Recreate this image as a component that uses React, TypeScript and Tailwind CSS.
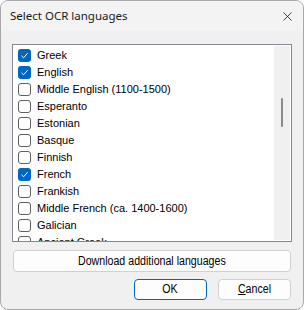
import { X } from "lucide-react"

const languages = [
  { name: "Greek", checked: true },
  { name: "English", checked: true },
  { name: "Middle English (1100-1500)", checked: false },
  { name: "Esperanto", checked: false },
  { name: "Estonian", checked: false },
  { name: "Basque", checked: false },
  { name: "Finnish", checked: false },
  { name: "French", checked: true },
  { name: "Frankish", checked: false },
  { name: "Middle French (ca. 1400-1600)", checked: false },
  { name: "Galician", checked: false },
  { name: "Ancient Greek", checked: false },
]

function Checkbox({ checked }: { checked: boolean }) {
  if (checked) {
    return (
      <span className="flex h-[13px] w-[13px] shrink-0 items-center justify-center rounded-[3px] bg-[#0067c0]">
        <svg width="9" height="9" viewBox="0 0 9 9" fill="none">
          <path d="M1.5 4.8 L3.6 6.8 L7.6 2.2" stroke="white" strokeWidth="1" />
        </svg>
      </span>
    )
  }
  return <span className="h-[13px] w-[13px] shrink-0 rounded-[3px] border border-[#5f5f5f] bg-white" />
}

export default function App() {
  return (
    <div className="h-[310px] w-[304px] bg-white">
      <div className="flex h-full w-full flex-col overflow-hidden rounded-lg border border-[#a8a8a8] bg-[#f0f0f0] font-['Liberation_Sans',sans-serif] text-[11px] text-black">
        {/* Title bar */}
        <div className="flex h-[30px] shrink-0 items-center justify-between bg-[#f3f3f3] pl-[9px] pr-[8px]">
          <span className="font-['Noto_Sans',sans-serif] text-[11.5px] text-[#1a1a1a]">Select OCR languages</span>
          <X className="size-[15px] text-[#1a1a1a]" strokeWidth={1.3} />
        </div>

        {/* Language list */}
        <div className="mx-[11px] mt-[13px] flex h-[198px] shrink-0 overflow-hidden border border-[#838790] bg-white">
          <div className="flex-1 overflow-hidden pt-[2px]">
            {languages.map((lang) => (
              <div key={lang.name} className="flex h-[17px] items-center gap-[6px] pl-[5px] whitespace-nowrap">
                <Checkbox checked={lang.checked} />
                <span className="text-[11px]">{lang.name}</span>
              </div>
            ))}
          </div>
          <div className="relative my-[1px] mr-[1px] w-[16px] shrink-0 bg-[#f0f0f0]">
            <div className="absolute left-[7px] top-[52px] h-[29px] w-[2px] rounded-full bg-[#8a8a8a]" />
          </div>
        </div>

        {/* Buttons */}
        <div className="mx-[12px] mt-[8px]">
          <button className="h-[22px] w-full rounded-[4px] border border-[#d0d0d0] bg-[#fdfdfd] text-[12.5px]">
            <span className="inline-block scale-x-[0.85]">Download additional languages</span>
          </button>
        </div>
        <div className="mx-[12px] mt-[7px] flex justify-end gap-[11px]">
          <button className="h-[21px] w-[73px] rounded-[4px] border border-[#0067c0] bg-[#fdfdfd] text-[12.5px]">
            <span className="inline-block scale-x-[0.85]">OK</span>
          </button>
          <button className="h-[21px] w-[73px] rounded-[4px] border border-[#d0d0d0] bg-[#fdfdfd] text-[12.5px]">
            <span className="inline-block scale-x-[0.85]">
              <span className="underline">C</span>ancel
            </span>
          </button>
        </div>
      </div>
    </div>
  )
}
